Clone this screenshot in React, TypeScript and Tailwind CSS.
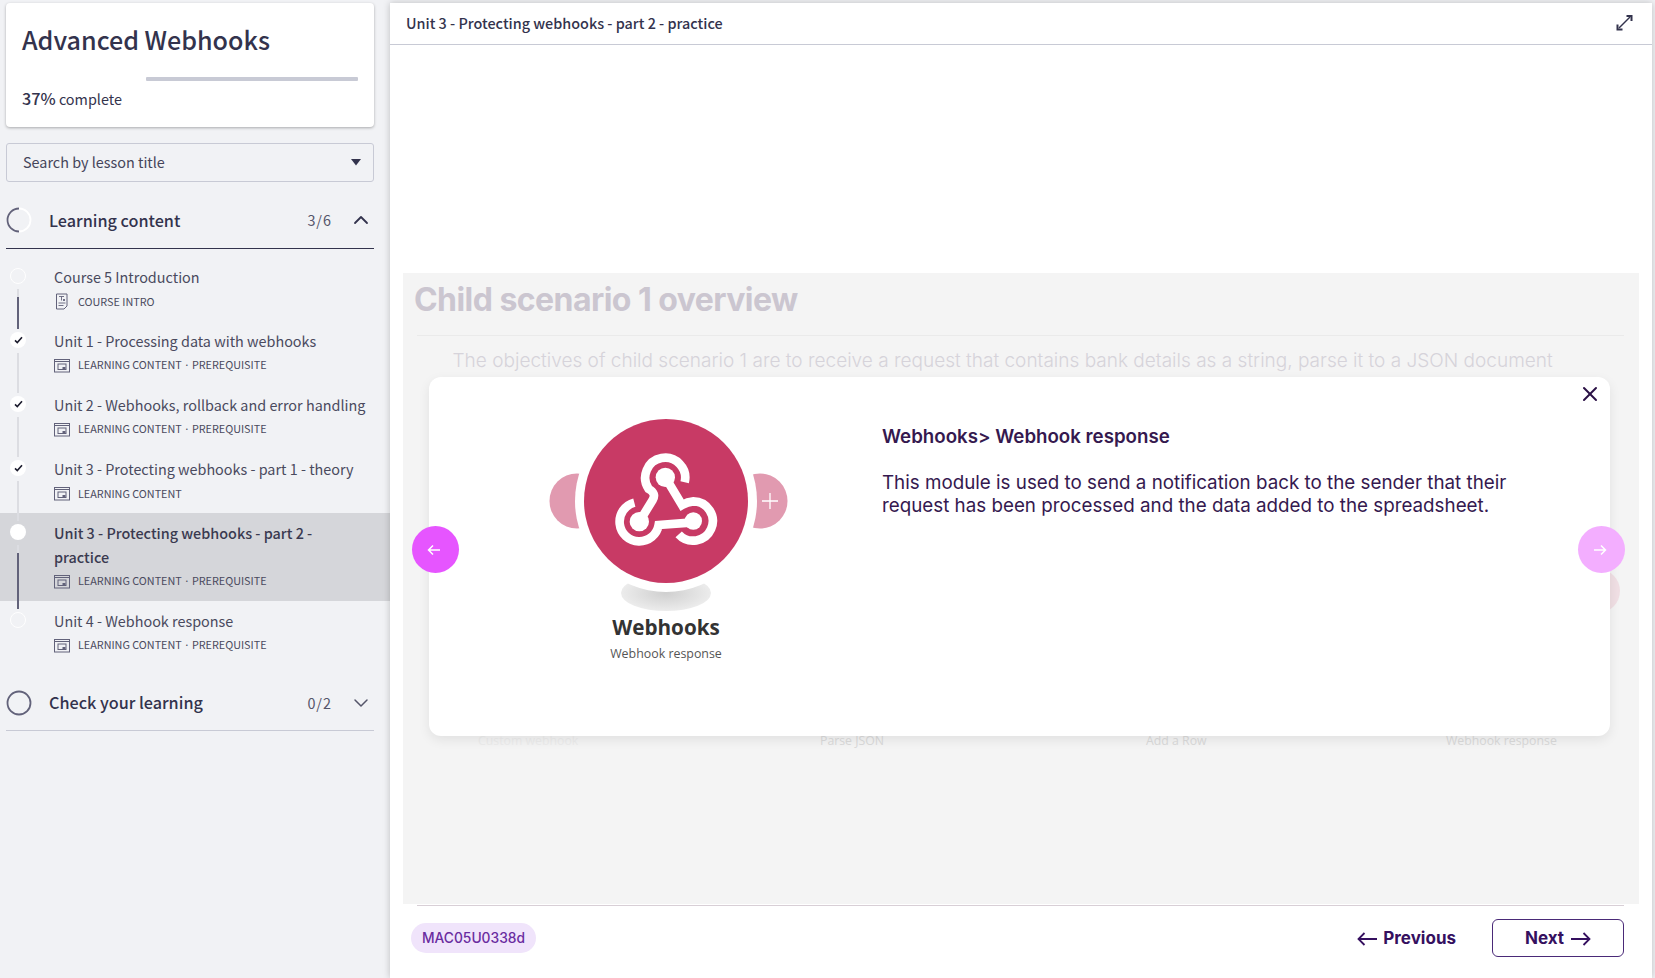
import { ChevronDown, ChevronUp, X } from "lucide-react";

const SANS = "font-['Noto_Sans_CJK_SC','Source_Sans_Pro',sans-serif]";

type Lesson = {
  title: string;
  meta: string[];
  icon: "doc" | "window";
  state: "todo" | "done" | "active";
  // dark part of the connector, in px from the bottom of the line
  progress?: number;
  last?: boolean;
};

const lessons: Lesson[] = [
  { title: "Course 5 Introduction", meta: ["COURSE INTRO"], icon: "doc", state: "todo", progress: 32 },
  { title: "Unit 1 - Processing data with webhooks", meta: ["LEARNING CONTENT", "PREREQUISITE"], icon: "window", state: "done" },
  { title: "Unit 2 - Webhooks, rollback and error handling", meta: ["LEARNING CONTENT", "PREREQUISITE"], icon: "window", state: "done" },
  { title: "Unit 3 - Protecting webhooks - part 1 - theory", meta: ["LEARNING CONTENT"], icon: "window", state: "done" },
  { title: "Unit 3 - Protecting webhooks - part 2 - practice", meta: ["LEARNING CONTENT", "PREREQUISITE"], icon: "window", state: "active", progress: 56 },
  { title: "Unit 4 - Webhook response", meta: ["LEARNING CONTENT", "PREREQUISITE"], icon: "window", state: "todo", last: true },
];

function MetaIcon({ kind }: { kind: Lesson["icon"] }) {
  if (kind === "doc") {
    return (
      <svg width="16" height="17" viewBox="0 0 16 17" fill="none" stroke="#62627a" strokeWidth="1" className="shrink-0">
        <path d="M2.5 1h10.500v12l-3 3h-7.500z" />
        <path d="M5 3.500h5M7.500 3.500v4M9 6l2 2M11 6l-2 2M4.500 10h7M4.500 12.500h5" strokeWidth="0.9" />
      </svg>
    );
  }
  return (
    <svg width="16" height="14" viewBox="0 0 16 14" fill="none" stroke="#62627a" strokeWidth="1" className="shrink-0">
      <rect x="0.500" y="0.500" width="15" height="12.500" />
      <path d="M0.500 2.500h15" />
      <rect x="4" y="5" width="8" height="5.500" />
      <rect x="8.500" y="8" width="3" height="2" fill="#62627a" stroke="none" />
    </svg>
  );
}

function Marker({ lesson }: { lesson: Lesson }) {
  const base = "flex h-4 w-4 items-center justify-center rounded-full";
  if (lesson.state === "done") {
    return (
      <span className={`${base} bg-white`}>
        <svg width="9" height="8" viewBox="0 0 9 8" fill="none" stroke="#1c1c2e" strokeWidth="1.600">
          <path d="M1 4.300l2.300 2.200L8 1.200" />
        </svg>
      </span>
    );
  }
  if (lesson.state === "active") return <span className={`${base} bg-white`} />;
  return <span className={`${base} border border-white`} />;
}

function LessonRow({ lesson }: { lesson: Lesson }) {
  const active = lesson.state === "active";
  const lineHeight = active ? "h-[64px]" : "h-[40px]";
  return (
    <div className={`flex h-auto ${active ? "bg-[#d5d6da]" : ""}`}>
      <div className="relative z-10 flex w-[54px] shrink-0 flex-col pl-[10px] pt-[11px]">
        <Marker lesson={lesson} />
        {!lesson.last && (
          <div className={`mb-[-8px] ml-[7px] mt-[5px] flex w-[2px] flex-col justify-end bg-[#dcdde2] ${lineHeight}`}>
            {lesson.progress && (
              <div className="w-[2px] bg-[#62627a]" style={{ height: lesson.progress }} />
            )}
          </div>
        )}
      </div>
      <div className={`w-[320px] pb-[10px] pt-[8px] ${active ? "pr-[58px]" : "pr-0"}`}>
        <div className={`text-[14.400px] leading-[24px] ${active ? "font-medium text-[#3a3a50]" : "text-[#4a4a5e]"}`}>
          {lesson.title}
        </div>
        <div className="mt-[3px] flex h-[19px] items-center gap-2">
          <MetaIcon kind={lesson.icon} />
          <span className="text-[10.800px] leading-none text-[#4a4a5e]">
            {lesson.meta[0]}
            {lesson.meta[1] && (
              <>
                <span className="mx-[3.500px] font-['Inter',sans-serif]">·</span>
                {lesson.meta[1]}
              </>
            )}
          </span>
        </div>
      </div>
    </div>
  );
}

function Sidebar() {
  return (
    <aside className={`${SANS} w-[390px] shrink-0 text-[#33334d]`}>
      <div className="ml-[6px] mr-[16px] mt-[3px] h-[124px] rounded-[4px] bg-white px-4 pt-[14px] shadow-[0_1px_3px_rgba(0,0,0,0.3)]">
        <h1 className="text-[25.100px] font-medium leading-[44px]">Advanced Webhooks</h1>
        <div className="ml-[124px] mt-[16px] h-1 w-[212px] rounded-[1px] bg-[#c8cad5]" />
        <p className="mt-[5px] text-[14.400px] leading-[24px]">
          <span className="text-[16.200px] font-medium">37%</span> complete
        </p>
      </div>

      <div className="ml-[6px] mr-[16px] mt-4 flex h-[39px] items-center justify-between rounded-[3px] border border-[#c8cad5] pb-[2px] pl-4 pr-[12px] text-[14.400px] text-[#45455a]">
        Search by lesson title
        <svg width="10" height="7" viewBox="0 0 10 7" fill="#33334d" className="mt-[2px]">
          <path d="M0 0h10L5 6.500z" />
        </svg>
      </div>

      <div className="ml-[6px] mr-[16px] mt-[11px] flex h-[56px] items-center border-b border-[#33334d] pb-px">
        <svg width="26" height="26" viewBox="0 0 26 26" fill="none" strokeWidth="1.800" className="shrink-0">
          <circle cx="13" cy="13" r="11.500" stroke="#ffffff" />
          <path d="M13 1.500A11.500 11.500 0 0 0 13 24.500" stroke="#62627a" />
        </svg>
        <span className="ml-[17px] flex-1 text-[16.200px] font-medium">Learning content</span>
        <span className="text-[14.400px] tracking-[1px] text-[#55556a]">3/6</span>
        <ChevronUp className="ml-[17px] mr-px h-6 w-6" strokeWidth={1.800} />
      </div>

      <div className="pb-[10px] pt-[8px]">
        {lessons.map((l) => (
          <LessonRow key={l.title} lesson={l} />
        ))}
      </div>

      <div className="ml-[6px] mr-[16px] flex h-[56px] items-center border-b border-[#c8cad5]">
        <svg width="26" height="26" viewBox="0 0 26 26" fill="none" strokeWidth="1.800" className="shrink-0">
          <circle cx="13" cy="13" r="11.500" stroke="#62627a" />
        </svg>
        <span className="ml-[17px] flex-1 text-[16.200px] font-medium">Check your learning</span>
        <span className="text-[14.400px] tracking-[1px] text-[#55556a]">0/2</span>
        <ChevronDown className="ml-[17px] mr-px h-6 w-6 text-[#55556a]" strokeWidth={1.500} />
      </div>
    </aside>
  );
}

function WebhookModule() {
  return (
    <svg width="240" height="195" viewBox="0 0 240 195" className="shrink-0 overflow-visible">
      <defs>
        <radialGradient id="module-shadow">
          <stop offset="0" stopColor="#cfcfcf" />
          <stop offset="1" stopColor="#ececec" />
        </radialGradient>
      </defs>
      <ellipse cx="120" cy="175" rx="45" ry="18" fill="url(#module-shadow)" />
      <circle cx="31" cy="83" r="27.500" fill="#e19ab0" />
      <circle cx="214" cy="83" r="27.500" fill="#e19ab0" />
      <circle cx="120" cy="83" r="91" fill="#ffffff" />
      <circle cx="120" cy="83" r="82" fill="#c83a65" />
      <path d="M216 83h16M224 75v16" stroke="#ffffff" strokeWidth="1.300" />
      <svg x="60" y="27" width="120" height="110" viewBox="0 0 360 330" fill="none" stroke="#ffffff" strokeWidth="26">
        <path d="M236 112A60 60 0 1 0 128 132Q152 145 140 165L100 230" />
        <path d="M85 173A59 59 0 1 0 158 240L262 232" />
        <path d="M178 97L228 180Q245 170 262 169A59 59 0 1 1 218 268" />
        <circle cx="178" cy="97" r="29" fill="#ffffff" stroke="none" />
        <circle cx="100" cy="230" r="29" fill="#ffffff" stroke="none" />
        <circle cx="262" cy="228" r="26" fill="#ffffff" stroke="none" />
      </svg>
    </svg>
  );
}

function Modal() {
  return (
    <div className="absolute left-[26px] top-[104px] flex h-[359px] w-[1181px] rounded-xl bg-white shadow-[0_4px_12px_rgba(0,0,0,0.08)]">
      <div className="flex w-[453px] shrink-0 flex-col items-center pl-[21px] pt-[41px] font-['Open_Sans',sans-serif]">
        <WebhookModule />
        <div className="text-[20.700px] font-bold leading-[28px] text-[#333333]">Webhooks</div>
        <div className="mt-[4px] text-[12.400px] leading-[18px] text-[#555555]">Webhook response</div>
      </div>
      <div className="w-[640px] pt-[48px] font-['Inter',sans-serif] text-[#35194f]">
        <h3 className="text-[18.700px] font-semibold leading-[24px]">Webhooks&gt; Webhook response</h3>
        <p className="mt-[22px] text-[18.800px] leading-[23px]">
          This module is used to send a notification back to the sender that their request has been processed and the data added to the spreadsheet.
        </p>
      </div>
      <X className="absolute right-[8px] top-[5px] h-6 w-6 text-[#2a1045]" strokeWidth={2} />
    </div>
  );
}

function SlideContent() {
  return (
    <section className="relative mx-[13px] mt-[228px] h-[631px] w-[1236px] bg-[#f4f4f4] font-['Inter',sans-serif]">
      <h2 className="px-[11px] pt-[5px] text-[32px] font-bold leading-[44px] tracking-[-0.550px] text-[#cbc6d0]">
        Child scenario 1 overview
      </h2>
      <div className="ml-[14px] mr-[15px] mt-[13px] h-px bg-[#eaeaea]" />
      <p className="ml-[49.500px] mt-[12px] whitespace-nowrap text-[19.050px] font-light leading-[26px] text-[#d6d3da]">
        The objectives of child scenario 1 are to receive a request that contains bank details as a string, parse it to a JSON document
      </p>
      <div className="ml-[75px] mt-[358px] flex font-['Open_Sans',sans-serif] text-[12.300px] leading-[18px]">
        <span className="w-[342px] text-[#ececec]">Custom webhook</span>
        <span className="w-[326px] text-[#dadada]">Parse JSON</span>
        <span className="w-[300px] text-[#dadada]">Add a Row</span>
        <span className="text-[#dadada]">Webhook response</span>
      </div>

      <div className="absolute left-[1190px] top-[296px] h-[44px] w-[27px] rounded-r-full bg-[#f0dfe4]" />
      <Modal />

      <button className="absolute left-[9px] top-[253px] flex h-[47px] w-[47px] items-center justify-center rounded-full bg-[#e655ff]">
        <ArrowGlyph dir="left" />
      </button>
      <button className="absolute left-[1175px] top-[253px] flex h-[47px] w-[47px] items-center justify-center rounded-full bg-[#f3aeff]">
        <ArrowGlyph dir="right" />
      </button>
    </section>
  );
}

function ArrowGlyph({ dir }: { dir: "left" | "right" }) {
  return (
    <svg width="14" height="12" viewBox="0 0 14 12" fill="none" stroke="#ffffff" strokeWidth="1.500" className="-ml-[3px]">
      {dir === "left" ? <path d="M13 6H1.500M6 1.500L1.500 6 6 10.500" /> : <path d="M1 6h11.500M8 1.500L12.500 6 8 10.500" />}
    </svg>
  );
}

function NavArrow({ dir }: { dir: "left" | "right" }) {
  return (
    <svg width="20" height="14" viewBox="0 0 20 14" fill="none" stroke="#35105f" strokeWidth="1.800">
      {dir === "left" ? <path d="M20 7H1.500M7.500 1L1.500 7l6 6" /> : <path d="M0 7h18.500M12.500 1l6 6-6 6" />}
    </svg>
  );
}

export default function App() {
  return (
    <div className="flex h-[978px] w-[1655px] overflow-hidden bg-[#f1f2f5]">
      <Sidebar />
      <main className="mt-[3px] flex h-[975px] w-[1262px] flex-col bg-white shadow-[0_0_7px_rgba(0,0,0,0.22)]">
        <header className={`${SANS} flex h-[42px] shrink-0 items-center justify-between border-b border-[#c8cad5] pb-[2px] pl-4 pr-[19px] text-[14.400px] font-medium text-[#33334d]`}>
          Unit 3 - Protecting webhooks - part 2 - practice
          <svg width="17" height="17" viewBox="0 0 17 17" fill="none" stroke="#33334d" strokeWidth="1.500">
            <path d="M3 14L14 3" />
            <path d="M10.500 2H15.500V7M1.500 10.500V15.500H6.500" strokeWidth="2" />
          </svg>
        </header>

        <SlideContent />

        <div className="ml-[27px] mr-[28px] mt-px h-px shrink-0 bg-[#d8cfd6]" />
        <footer className="flex flex-1 items-start justify-between pl-[21px] pr-[28px] pt-[13px] font-['Inter',sans-serif]">
          <span className="mt-[4px] flex h-[30px] w-[125px] items-center justify-center rounded-full bg-[#f0e4fb] text-[13.800px] font-medium text-[#6a2ca0]">
            MAC05U0338d
          </span>
          <div className="flex items-center gap-[36px]">
            <button className="flex items-center gap-[6px] pt-[1px] text-[17px] font-bold text-[#35105f]">
              <NavArrow dir="left" />
              Previous
            </button>
            <button className="flex h-[38px] w-[132px] items-center justify-center gap-[7px] rounded-[6px] border-[1.500px] border-[#4a2a78] pt-[1px] text-[17px] font-bold text-[#35105f]">
              Next
              <NavArrow dir="right" />
            </button>
          </div>
        </footer>
      </main>
    </div>
  );
}
